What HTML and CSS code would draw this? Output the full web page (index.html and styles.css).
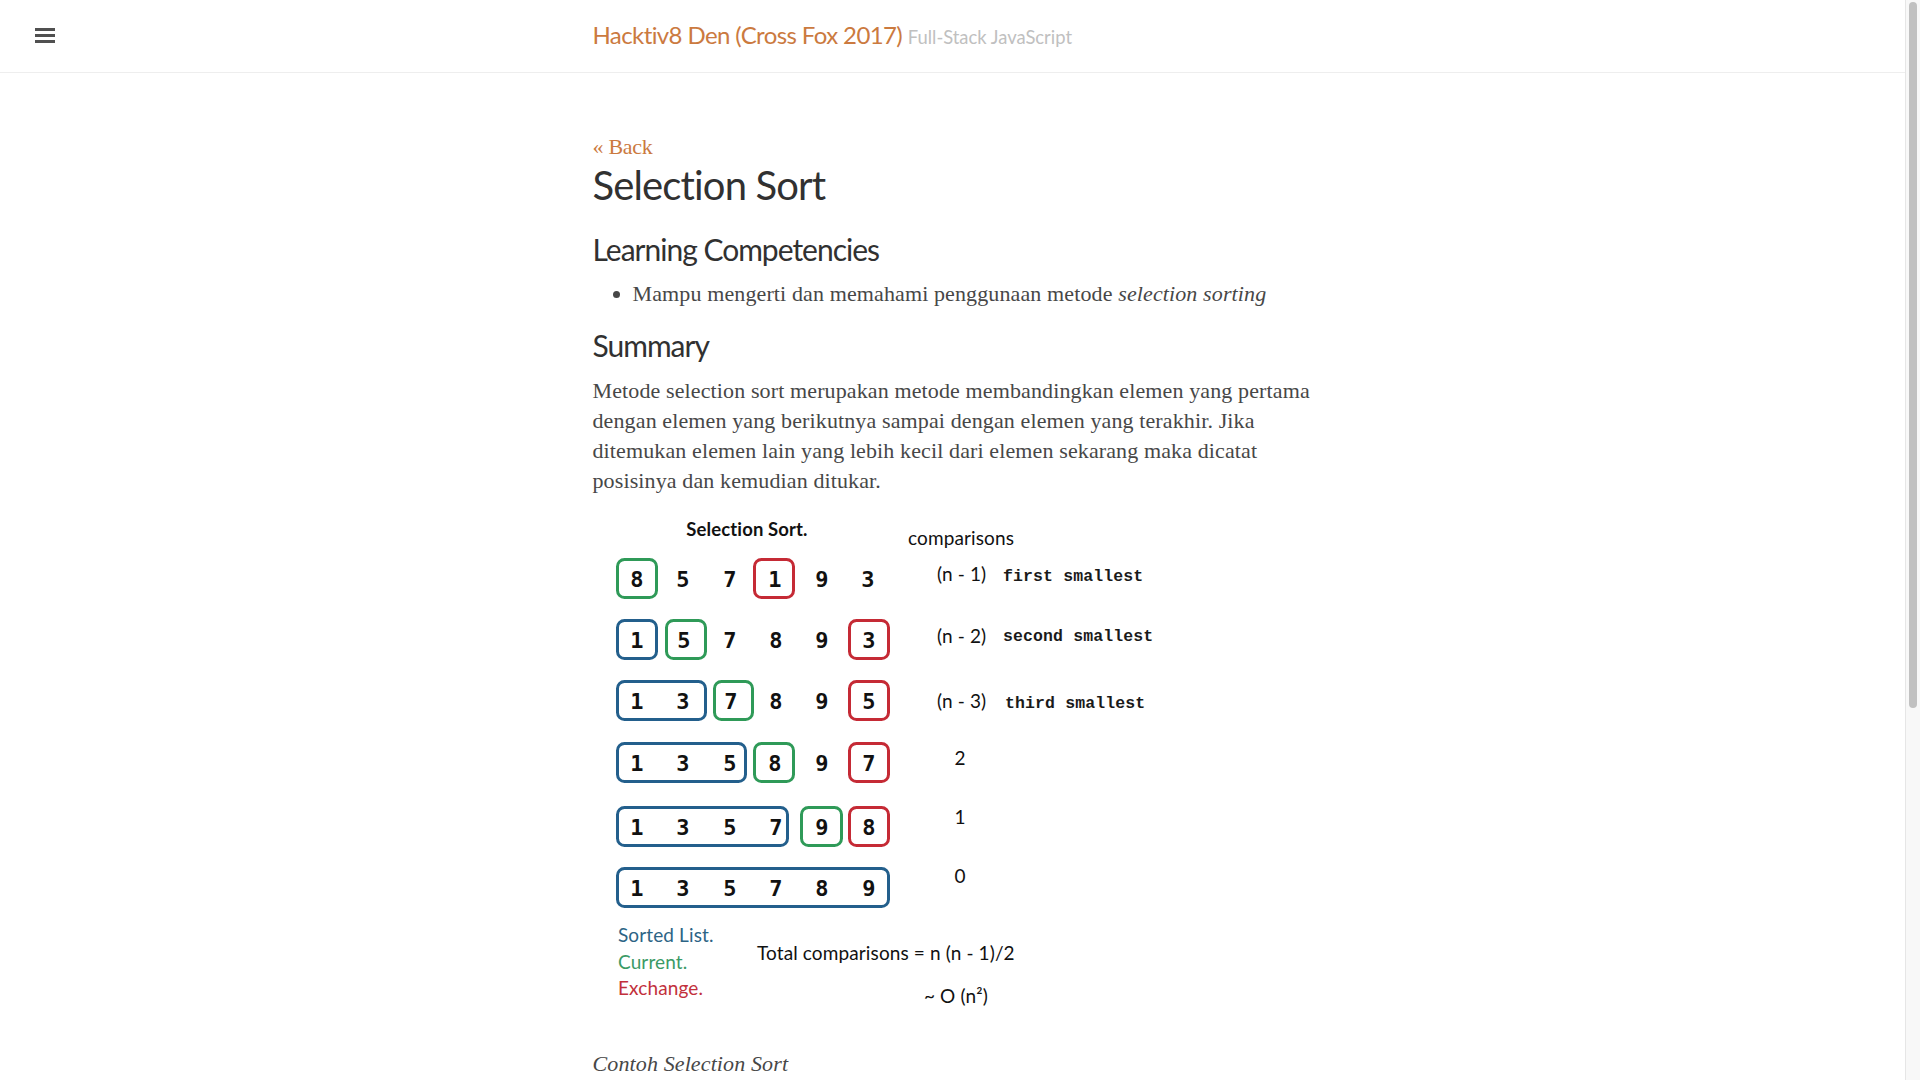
FILE: index.html
```html
<!DOCTYPE html>
<html lang="id">
<head>
<meta charset="utf-8">
<title>Selection Sort &middot; Hacktiv8 Den</title>
<link rel="stylesheet" href="styles.css">
</head>
<body>
<label class="sidebar-toggle" aria-label="Menu">
  <svg width="20" height="15" viewBox="0 0 20 15"><rect y="0" width="20" height="3"/><rect y="6" width="20" height="3"/><rect y="12" width="20" height="3"/></svg>
</label>
<div class="wrap">
  <div class="masthead">
    <div class="container">
      <h3 class="masthead-title"><a href="#">Hacktiv8 Den (Cross Fox 2017)</a> <small>Full-Stack JavaScript</small></h3>
    </div>
  </div>
  <div class="container content">
    <div class="page">
      <a class="back" href="#">&laquo; Back</a>
      <h1 class="page-title">Selection Sort</h1>
      <h2 class="first">Learning Competencies</h2>
      <ul>
        <li>Mampu mengerti dan memahami penggunaan metode <em>selection sorting</em></li>
      </ul>
      <h2 class="second">Summary</h2>
      <p>Metode selection sort merupakan metode membandingkan elemen yang pertama dengan elemen yang berikutnya sampai dengan elemen yang terakhir. Jika ditemukan elemen lain yang lebih kecil dari elemen sekarang maka dicatat posisinya dan kemudian ditukar.</p>
      <div class="figure">
        <svg width="560" height="513" viewBox="0 0 560 513">
          <text class="dtitle" x="154" y="21" text-anchor="middle">Selection Sort.</text>
          <text class="cmp" x="315" y="30">comparisons</text>

          <!-- row 1 -->
          <rect class="bg" x="24.5" y="44.5" width="39" height="38" rx="7"/>
          <rect class="br" x="161.5" y="44.5" width="39" height="38" rx="7"/>
          <g class="d" transform="translate(0,72)">
            <text x="44">8</text><text x="90">5</text><text x="137">7</text><text x="182">1</text><text x="229">9</text><text x="275">3</text>
          </g>
          <!-- row 2 -->
          <rect class="bb" x="24.5" y="105.5" width="39" height="38" rx="7"/>
          <rect class="bg" x="73.5" y="105.5" width="39" height="38" rx="7"/>
          <rect class="br" x="256.5" y="105.5" width="39" height="38" rx="7"/>
          <g class="d" transform="translate(0,133)">
            <text x="44">1</text><text x="91">5</text><text x="137">7</text><text x="183">8</text><text x="229">9</text><text x="276">3</text>
          </g>
          <!-- row 3 -->
          <rect class="bb" x="24.5" y="166.5" width="88" height="38" rx="7"/>
          <rect class="bg" x="121.5" y="166.5" width="38" height="38" rx="7"/>
          <rect class="br" x="256.5" y="166.5" width="39" height="38" rx="7"/>
          <g class="d" transform="translate(0,194)">
            <text x="44">1</text><text x="90">3</text><text x="138">7</text><text x="183">8</text><text x="229">9</text><text x="276">5</text>
          </g>
          <!-- row 4 -->
          <rect class="bb" x="24.5" y="228.5" width="128" height="38" rx="7"/>
          <rect class="bg" x="161.5" y="228.5" width="39" height="38" rx="7"/>
          <rect class="br" x="256.5" y="228.5" width="39" height="38" rx="7"/>
          <g class="d" transform="translate(0,256)">
            <text x="44">1</text><text x="90">3</text><text x="137">5</text><text x="182">8</text><text x="229">9</text><text x="276">7</text>
          </g>
          <!-- row 5 -->
          <rect class="bb" x="24.5" y="292.5" width="170" height="38" rx="7"/>
          <rect class="bg" x="208.5" y="292.5" width="40" height="38" rx="7"/>
          <rect class="br" x="256.5" y="292.5" width="39" height="38" rx="7"/>
          <g class="d" transform="translate(0,320)">
            <text x="44">1</text><text x="90">3</text><text x="137">5</text><text x="183">7</text><text x="229">9</text><text x="276">8</text>
          </g>
          <!-- row 6 -->
          <rect class="bb" x="24.5" y="353.5" width="271" height="38" rx="7"/>
          <g class="d" transform="translate(0,381)">
            <text x="44">1</text><text x="90">3</text><text x="137">5</text><text x="183">7</text><text x="229">8</text><text x="276">9</text>
          </g>

          <!-- comparisons column -->
          <text class="cmp" x="344" y="66">(n - 1)</text>
          <text class="mono" x="410" y="66">first smallest</text>
          <text class="cmp" x="344" y="128">(n - 2)</text>
          <text class="mono" x="410" y="126">second smallest</text>
          <text class="cmp" x="344" y="193">(n - 3)</text>
          <text class="mono" x="412" y="193">third smallest</text>
          <text class="cmp" x="367" y="250" text-anchor="middle">2</text>
          <text class="cmp" x="367" y="309" text-anchor="middle">1</text>
          <text class="cmp" x="367" y="368" text-anchor="middle">0</text>

          <!-- legend -->
          <text class="cmp sorted" x="25" y="427">Sorted List.</text>
          <text class="cmp current" x="25" y="454">Current.</text>
          <text class="cmp exchange" x="25" y="480">Exchange.</text>
          <text class="cmp" x="164" y="445">Total comparisons = n (n - 1)/2</text>
          <text class="cmp" x="331" y="488">~ O (n²)</text>
        </svg>
      </div>
      <p><em>Contoh Selection Sort</em></p>
<pre><code>function selectionSort(arr) {
  for (var i = 0; i &lt; arr.length - 1; i++) {
    var min = i;
    for (var j = i + 1; j &lt; arr.length; j++) {
      if (arr[j] &lt; arr[min]) {
        min = j;
      }
    }
    if (min !== i) {
      var temp = arr[i];
      arr[i] = arr[min];
      arr[min] = temp;
    }
  }
  return arr;
}

console.log(selectionSort([8, 5, 7, 1, 9, 3]));
// [ 1, 3, 5, 7, 8, 9 ]</code></pre>
    </div>
  </div>
</div>
<div class="scrollbar" aria-hidden="true"><div class="scrollbar-thumb"></div></div>
</body>
</html>
```
FILE: styles.css
```css
* { box-sizing: border-box; }

html {
  font-size: 20px;
}

body {
  margin: 0 15px 0 0;
  font-family: "Liberation Serif", "DejaVu Serif", serif;
  font-size: 22px;
  line-height: 30px;
  letter-spacing: 0.12px;
  color: #474747;
  background: #fff;
}

a {
  color: #cb7a3f;
  text-decoration: none;
}

/* imitation of the browser's vertical scrollbar */
.scrollbar {
  position: fixed;
  top: 0;
  right: 0;
  width: 15px;
  height: 100vh;
  background: #f8f8f8;
  border-left: 1px solid #e6e6e6;
  padding: 2px 3px 0 3px;
}
.scrollbar-thumb {
  width: 8px;
  height: 706px;
  background: #c1c1c1;
  border-radius: 4px;
}

.sidebar-toggle {
  position: absolute;
  top: 28px;
  left: 35px;
  display: block;
  line-height: 0;
  cursor: pointer;
}
.sidebar-toggle svg { fill: #505050; display: block; }

.container {
  max-width: 38rem;
  margin: 0 auto;
  padding: 0 1rem;
}

.masthead {
  padding-top: 19px;
  padding-bottom: 19px;
  margin-bottom: 60px;
  border-bottom: 1px solid #eee;
}

h1, h2, h3 {
  font-family: "Lato", "Noto Sans", sans-serif;
  font-weight: 400;
  color: #313131;
  letter-spacing: -0.5px;
}

.masthead-title {
  margin: 0;
  font-size: 24px;
  line-height: 31.25px;
  letter-spacing: -0.6px;
}
.masthead-title a { color: #cb7a3f; }
.masthead-title small {
  font-size: 18.4px;
  color: #c0c0c0;
  letter-spacing: 0;
}

.back {
  display: block;
  height: 28px;
  line-height: 27px;
  letter-spacing: -0.3px;
}

h1.page-title {
  margin: -1.5px 0 0;
  font-size: 40px;
  line-height: 50px;
  letter-spacing: -0.85px;
}

h2 {
  font-size: 30px;
  line-height: 37.5px;
  letter-spacing: -1px;
}
h2.first { margin: 21px 0 11px; }
h2.second { margin: 17px 0 11.5px; }

ul {
  margin: 0 0 17.5px;
  padding-left: 40px;
}

p {
  margin: 0 0 20px;
}

.figure {
  height: 514px;
  margin: -0.5px 0 20px;
}
.figure svg { display: block; }

.figure .dtitle {
  font-family: "Lato", sans-serif;
  font-weight: 700;
  font-size: 18.5px;
  fill: #111;
}
.figure .cmp {
  font-family: "Lato", sans-serif;
  font-size: 19px;
  fill: #111;
}
.figure .mono {
  font-family: "Liberation Mono", monospace;
  font-weight: 700;
  font-size: 16.5px;
  fill: #1a1a1a;
}
.figure .d text {
  font-family: "DejaVu Sans Mono", monospace;
  font-weight: 700;
  font-size: 22px;
  text-anchor: middle;
  fill: #111;
}
.figure rect { fill: none; stroke-width: 3; }
.figure .bg { stroke: #2f9a58; }
.figure .br { stroke: #c52a35; }
.figure .bb { stroke: #235f8c; }
.figure .sorted { fill: #2c6485; }
.figure .current { fill: #3b9a66; }
.figure .exchange { fill: #c2303c; }

pre {
  margin: 0 0 20px;
  padding: 20px;
  background: #f9f9f9;
  font-family: "DejaVu Sans Mono", monospace;
  font-size: 16px;
  line-height: 22.4px;
  letter-spacing: 0;
  color: #333;
}

.page {
  padding-bottom: 63px;
}
```
